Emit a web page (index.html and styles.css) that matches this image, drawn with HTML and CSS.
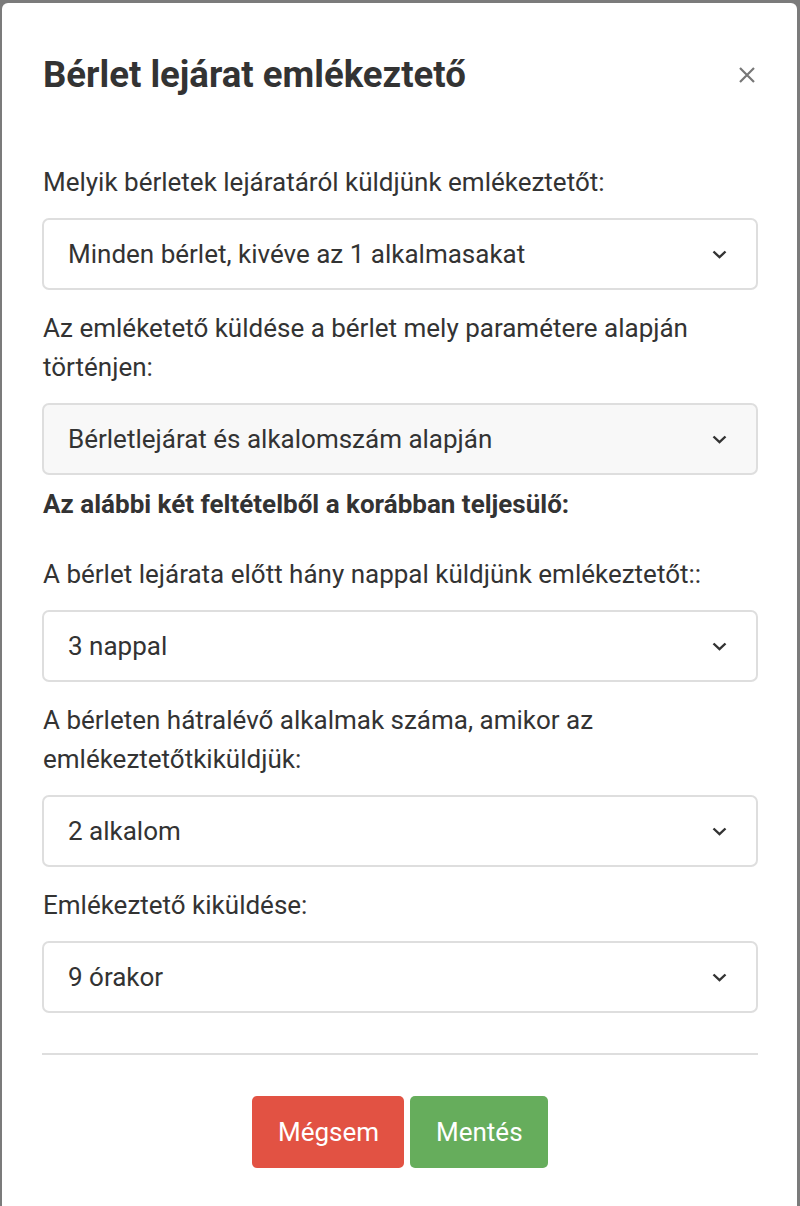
FILE: index.html
```html
<!DOCTYPE html>
<html lang="hu">
<head>
<meta charset="utf-8">
<title>Bérlet lejárat emlékeztető</title>
<link rel="stylesheet" href="styles.css">
</head>
<body>
<div class="modal">
  <div class="modal-header">
    <h1 class="modal-title">Bérlet lejárat emlékeztető</h1>
    <button class="close" type="button" aria-label="Bezárás">
      <svg width="16" height="16" viewBox="0 0 16 16"><path d="M1 1L15 15M15 1L1 15" stroke="#777" stroke-width="2.2" fill="none"/></svg>
    </button>
  </div>
  <div class="modal-body">
    <div class="form-group">
      <label class="label">Melyik bérletek lejáratáról küldjünk emlékeztetőt:</label>
      <div class="select"><span>Minden bérlet, kivéve az 1 alkalmasakat</span><svg class="chev" width="15" height="9" viewBox="0 0 15 9"><path d="M1.5 1.5L7.5 7.2L13.5 1.5" stroke="#333" stroke-width="2.4" fill="none"/></svg></div>
    </div>
    <div class="form-group">
      <label class="label">Az emléketető küldése a bérlet mely paramétere alapján történjen:</label>
      <div class="select disabled"><span>Bérletlejárat és alkalomszám alapján</span><svg class="chev" width="15" height="9" viewBox="0 0 15 9"><path d="M1.5 1.5L7.5 7.2L13.5 1.5" stroke="#333" stroke-width="2.4" fill="none"/></svg></div>
    </div>
    <p class="strong">Az alábbi két feltételből a korábban teljesülő:</p>
    <div class="form-group">
      <label class="label">A bérlet lejárata előtt hány nappal küldjünk emlékeztetőt::</label>
      <div class="select"><span>3 nappal</span><svg class="chev" width="15" height="9" viewBox="0 0 15 9"><path d="M1.5 1.5L7.5 7.2L13.5 1.5" stroke="#333" stroke-width="2.4" fill="none"/></svg></div>
    </div>
    <div class="form-group">
      <label class="label">A bérleten hátralévő alkalmak száma, amikor az emlékeztetőtkiküldjük:</label>
      <div class="select"><span>2 alkalom</span><svg class="chev" width="15" height="9" viewBox="0 0 15 9"><path d="M1.5 1.5L7.5 7.2L13.5 1.5" stroke="#333" stroke-width="2.4" fill="none"/></svg></div>
    </div>
    <div class="form-group last">
      <label class="label">Emlékeztető kiküldése:</label>
      <div class="select"><span>9 órakor</span><svg class="chev" width="15" height="9" viewBox="0 0 15 9"><path d="M1.5 1.5L7.5 7.2L13.5 1.5" stroke="#333" stroke-width="2.4" fill="none"/></svg></div>
    </div>
    <hr class="divider">
    <div class="actions">
      <button class="btn btn-cancel" type="button">Mégsem</button>
      <button class="btn btn-save" type="button">Mentés</button>
    </div>
  </div>
</div>
</body>
</html>
```

FILE: styles.css
```css
html, body {
  margin: 0;
  padding: 0;
  height: 100%;
}
body {
  background: #7b7b7b;
  font-family: Roboto, "Liberation Sans", sans-serif;
  color: #333;
  overflow: hidden;
}
.modal {
  margin: 3px 3px 0 2px;
  background: #fff;
  border-radius: 6px 6px 0 0;
  min-height: 1260px;
}
.modal-header {
  display: flex;
  align-items: center;
  justify-content: space-between;
  padding: 50px 42px 0 41px;
}
.modal-title {
  margin: 0;
  font-size: 36.6px;
  line-height: 44px;
  font-weight: 700;
  color: #333;
}
.close {
  border: 0;
  background: none;
  padding: 0;
  width: 16px;
  height: 16px;
  display: flex;
}
.modal-body {
  padding: 66px 39px 60px 40px;
}
.form-group {
  display: flex;
  flex-direction: column;
  margin-bottom: 19px;
}
.form-group.last {
  margin-bottom: 40px;
}
.label {
  font-size: 26px;
  line-height: 39px;
  margin: 0 0 16px 1px;
}
.select {
  height: 72px;
  box-sizing: border-box;
  border: 2px solid #dedede;
  border-radius: 7px;
  display: flex;
  align-items: center;
  justify-content: space-between;
  padding: 0 29px 0 24px;
  font-size: 26px;
  background: #fff;
}
.select.disabled {
  background: #f8f8f8;
}
.chev {
  margin-top: 1px;
}
.strong {
  font-size: 26px;
  line-height: 39px;
  font-weight: 700;
  margin: -9px 0 31px 1px;
}
.divider {
  border: 0;
  height: 2px;
  background: #dedede;
  margin: 0 0 41px;
}
.actions {
  display: flex;
  justify-content: center;
  gap: 6px;
}
.btn {
  font-family: Roboto, "Liberation Sans", sans-serif;
  font-size: 26px;
  line-height: 39px;
  height: 72px;
  border: 0;
  border-radius: 5px;
  color: #fff;
  padding: 0 26px;
}
.btn-cancel {
  background: #e25243;
  width: 152px;
}
.btn-save {
  background: #66ad5c;
  width: 138px;
}
```
